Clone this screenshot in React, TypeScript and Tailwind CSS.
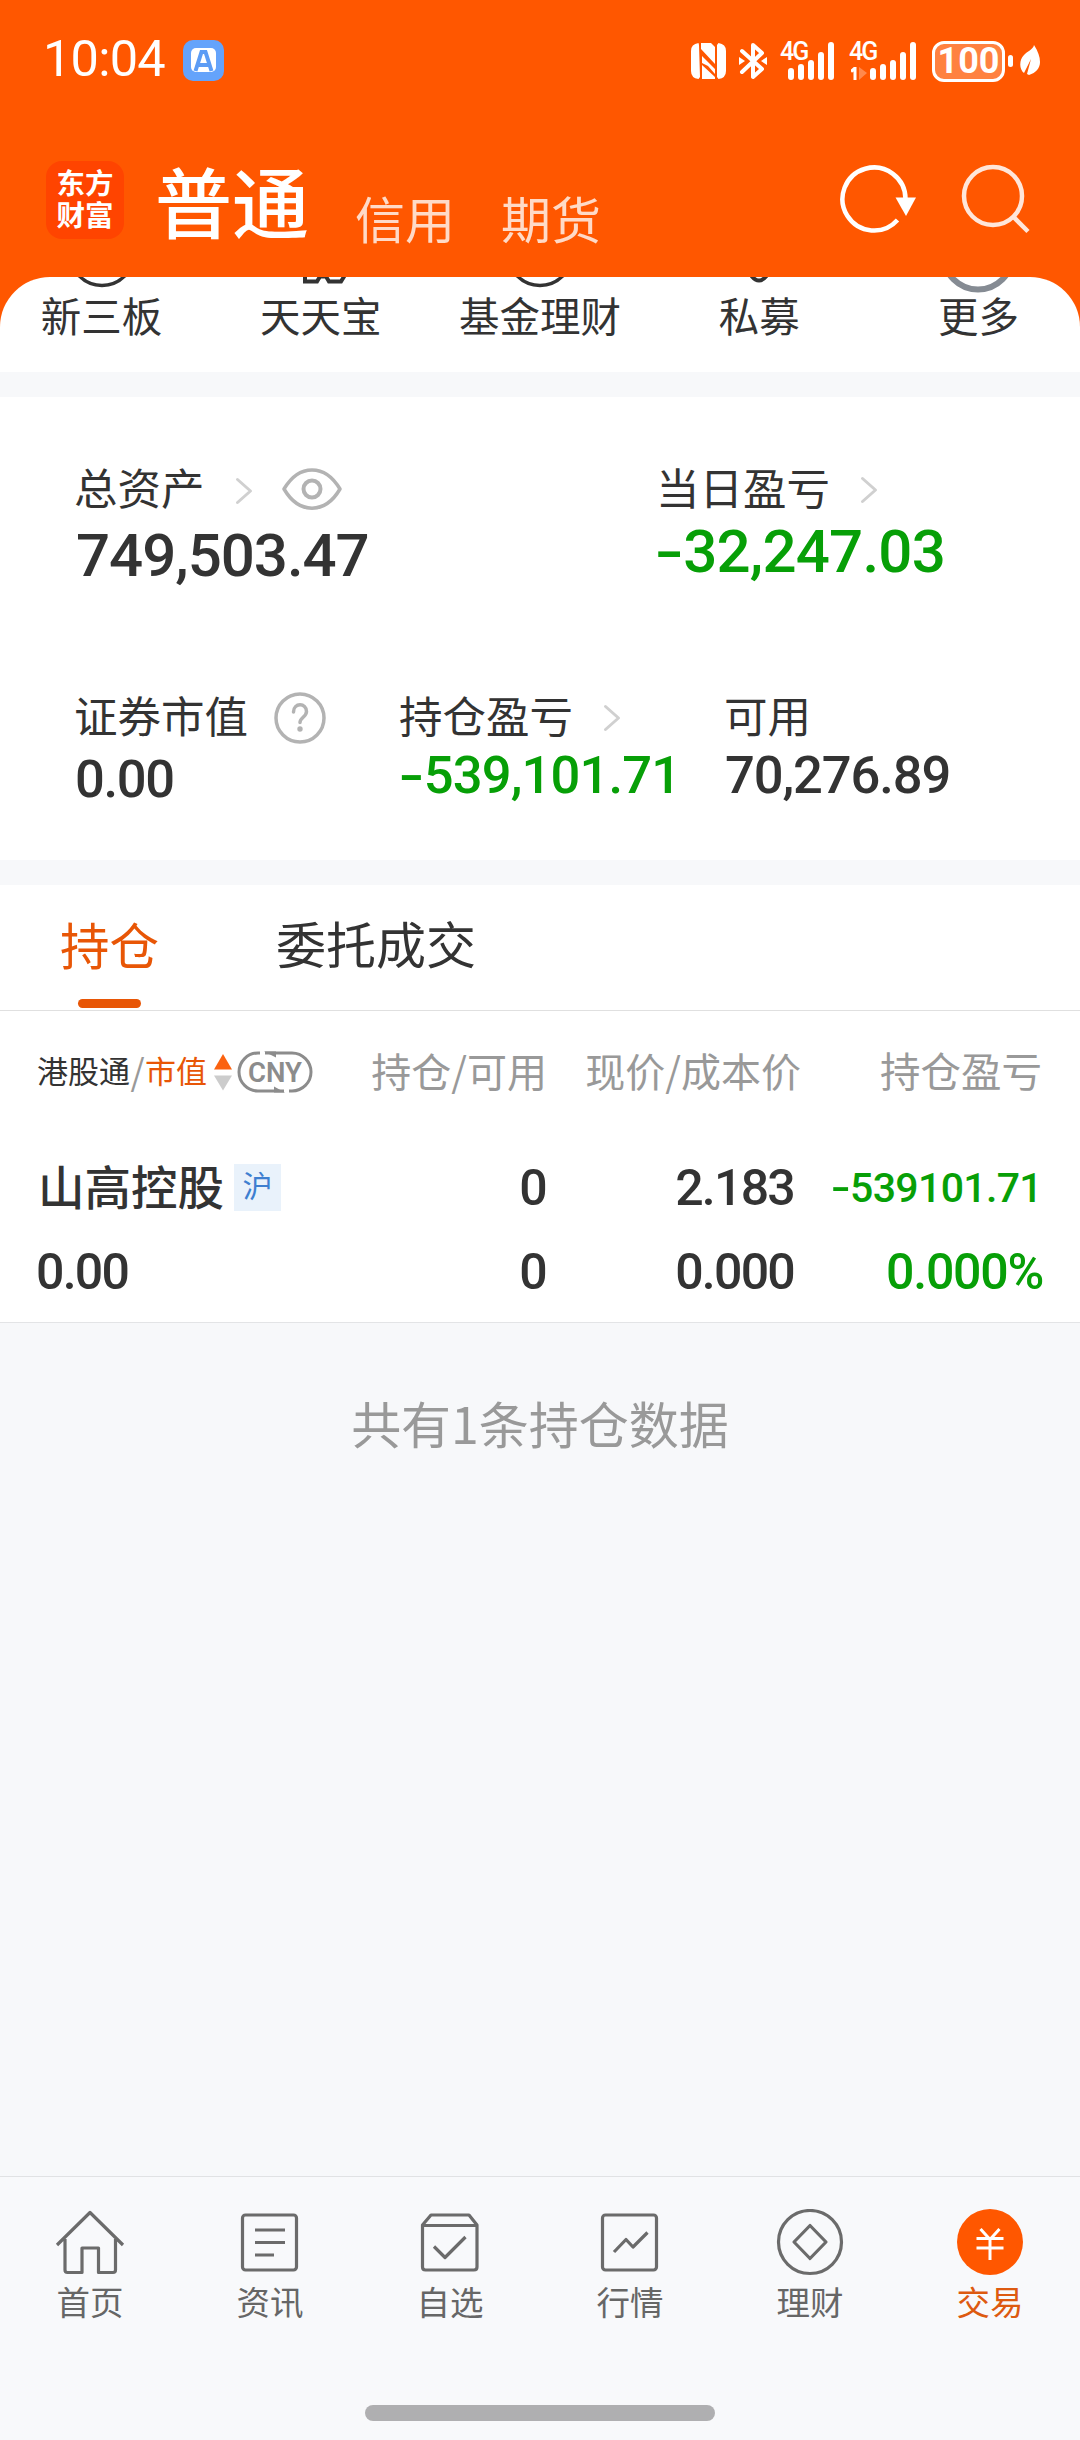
import React from "react";

const cjk = "font-['Noto_Sans_CJK_SC',sans-serif]";

function Num({ value, className = "" }: { value: string; className?: string }) {
  const negative = value.startsWith("-");
  return (
    <span className={"block whitespace-nowrap font-['Roboto','Noto_Sans_CJK_SC',sans-serif] font-medium " + className}>
      {negative && <span className="mr-[0.06em] inline-block w-[0.41em] text-left"><span className="inline-block origin-left scale-x-[1.4]">-</span></span>}
      {negative ? value.slice(1) : value}
    </span>
  );
}

function Chevron({ className = "" }: { className?: string }) {
  return (
    <svg className={className} width="18" height="28" viewBox="0 0 18 28" fill="none" stroke="#d0d0d0" strokeWidth="3" strokeLinecap="round" strokeLinejoin="round">
      <path d="M2.500 2.500 15.500 14 2.500 25.500" />
    </svg>
  );
}

function Bars({ heights }: { heights: number[] }) {
  return (
    <div className="flex h-[38px] items-end gap-1">
      {heights.map((h, i) => (
        <i key={i} className="block w-1.5 rounded-full bg-white" style={{ height: h }} />
      ))}
    </div>
  );
}

function StatusBar() {
  return (
    <div className="flex h-[122px] items-center pl-[43px] pr-[39px] text-white">
      <span className="mt-[-4px] font-['Roboto'] text-[50.5px] leading-[60px] tracking-[-0.015em]">10:04</span>
      <svg className="-mt-[2px] ml-[18px]" width="41" height="41" viewBox="0 0 41 41">
        <rect width="41" height="41" rx="10" fill="#64a3fb" />
        <rect x="8" y="8" width="25" height="24" rx="5" fill="#fff" />
        <path d="M12.500 31 18.500 12h4L28.500 31M15 25h11.500" fill="none" stroke="#5c9cf5" strokeWidth="4" />
      </svg>
      <div className="ml-auto flex items-center">
        <svg width="35" height="36" viewBox="0 0 35 36" fill="#fff">
          <path d="M7.500 0Q0 1 0 8V28Q0 35 7.500 36L9 34 8 2ZM27.500 0Q35 1 35 8V28Q35 35 27.500 36L26 34V2Z" />
          <path d="M10 0H20L24 4V21L10 6ZM11 13 24 26V31L17 23 11 20ZM11 22 24 34V36H11Z" />
        </svg>
        <svg className="ml-[13px]" width="28" height="38" viewBox="0 0 28 38" fill="none" stroke="#fff" strokeWidth="4" strokeLinecap="round" strokeLinejoin="round">
          <path d="M3 9 23 27 14 35V3l9 8L3 30" />
          <path d="M0 15v8l6-4ZM28 15v8l-6-4Z" fill="#fff" stroke="none" />
        </svg>
        <div className="relative ml-[21px]">
          <span className="absolute -left-2 -top-1 font-['Roboto'] text-[25px] font-medium leading-[28px] tracking-[-0.08em]">4G</span>
          <Bars heights={[12, 16, 20, 28, 38]} />
        </div>
        <div className="relative ml-[36px]">
          <span className="absolute -left-[21px] -top-1 font-['Roboto'] text-[25px] font-medium leading-[28px] tracking-[-0.08em]">4G</span>
          <svg className="absolute -left-[19px] top-[25px]" width="16" height="13" viewBox="0 0 16 13">
            <path d="M0 4.500 4 1v12" fill="none" stroke="#fff" strokeWidth="3" />
            <path d="M8 0v13L16 6Z" fill="#fff" opacity=".3" />
          </svg>
          <Bars heights={[12, 16, 20, 28, 38]} />
        </div>
        <div className="ml-[16px] flex h-[41px] w-[73px] items-center justify-center rounded-[12px] border-[3px] border-white bg-white/25 font-['Roboto'] text-[36px] font-bold leading-none">100</div>
        <i className="ml-[3px] block h-3 w-[5px] rounded-full bg-white" />
        <svg className="ml-[7px] mr-[1px]" width="20" height="32" viewBox="0 0 20 32">
          <path d="M14 0C18 6 20 12 20 17c0 6-4 11-11 13L7 29l4-15L4 28C-1 24-1 15 4 10 7 6 13 5 14 0Z" fill="#fff" />
        </svg>
      </div>
    </div>
  );
}

function Header() {
  return (
    <div className={"flex h-[155px] items-start pl-[46px] " + cjk}>
      <div className="mt-[39px] flex h-[78px] w-[78px] flex-col items-center justify-center rounded-[16px] bg-[#ff4400] pb-[5px] text-[28.5px] font-bold leading-[32px] text-white">
        <span>东方</span>
        <span>财富</span>
      </div>
      <span className="ml-[31px] mt-[36px] text-[77px] font-medium leading-[84px] text-white">普通</span>
      <span className="ml-[46px] mt-[67px] text-[50px] leading-[56px] text-[#ffdac7]">信用</span>
      <span className="ml-[46px] mt-[67px] text-[50px] leading-[56px] text-[#ffdac7]">期货</span>
      <svg className="ml-auto mt-[40px]" width="80" height="76" viewBox="0 0 80 76">
        <path d="M57.500 58A31.500 31.500 0 1 1 65.500 37" fill="none" stroke="#fff" strokeWidth="4.500" />
        <path d="M55.500 35.500h20.500L66 54Z" fill="#fff" />
      </svg>
      <svg className="ml-[41px] mr-[48px] mt-[40px]" width="71" height="76" viewBox="0 0 71 76" fill="none" stroke="#ffe6da" strokeWidth="4.500">
        <circle cx="32" cy="34" r="29" />
        <path d="m52 54.500 15 15" />
      </svg>
    </div>
  );
}

const quick = ["新三板", "天天宝", "基金理财", "私募", "更多"];

function QuickIcon({ index }: { index: number }) {
  return (
    <svg width="80" height="16" viewBox="0 0 80 16" fill="none" stroke="#333" strokeWidth="3.500">
      {(index === 0 || index === 2) && <circle cx="40" cy="-23.500" r="32" />}
      {index === 1 && <path d="M24-1V4.500H36L39-.5H45L48 4.500H60L64-2" strokeWidth="4" />}
      {index === 3 && <path d="M32.500-1Q40 8 47.500-1" strokeWidth="4" />}
      {index === 4 && <circle cx="40" cy="-22" r="34.500" stroke="#858b93" strokeWidth="6" />}
    </svg>
  );
}

function QuickRow() {
  return (
    <div className="bg-[#ff5700]">
      <div className="h-[95px] overflow-hidden rounded-t-[50px] bg-white">
        <div className="-mx-2 grid grid-cols-5">
          {quick.map((text, i) => (
            <div key={text} className={"flex flex-col items-center text-[40.5px] leading-[44px] text-[#333] " + cjk}>
              <QuickIcon index={i} />
              <span>{text}</span>
            </div>
          ))}
        </div>
      </div>
    </div>
  );
}

const label = "-ml-[2px] text-[43.5px] leading-[48px] text-[#333] whitespace-nowrap " + cjk;

function Assets() {
  return (
    <div className="h-[463px] bg-white pl-[76px] pt-[66px]">
      <div className="flex h-[228px]">
        <div className="w-[582px]">
          <div className="flex h-12 items-center">
            <span className={label}>总资产</span>
            <Chevron className="ml-[30px] mt-[7px]" />
            <svg className="ml-[29px] mt-[3px]" width="60" height="42" viewBox="0 0 60 42" fill="none" stroke="#b3b3b3" strokeWidth="3.500" strokeLinejoin="round">
              <path d="M2 21C17-4.500 43-4.500 58 21 43 46.500 17 46.500 2 21Z" />
              <circle cx="30" cy="21" r="8.500" strokeWidth="4" />
            </svg>
          </div>
          <Num value="749,503.47" className="mt-[15px] text-[60px] leading-[60px] tracking-[-0.017em] text-[#333]" />
        </div>
        <div>
          <div className="flex h-12 items-center">
            <span className={label}>当日盈亏</span>
            <Chevron className="ml-[30px] mt-[6px]" />
          </div>
          <Num value="-32,247.03" className="-ml-[3px] mt-[11px] text-[60px] leading-[60px] tracking-[-0.013em] text-[#079f07]" />
        </div>
      </div>
      <div className="grid grid-cols-[325px_325px_325px]">
        <div>
          <div className="flex h-12 items-center">
            <span className={label}>证券市值</span>
            <svg className="ml-[26px] mt-[6px]" width="52" height="52" viewBox="0 0 52 52" fill="none" stroke="#b3b3b3" strokeWidth="3.500" strokeLinecap="round">
              <circle cx="26" cy="26" r="24" />
              <path d="M19.500 20C19.500 10.500 32.500 10.500 32.500 19.500 32.500 25 26 25.500 26 30.500" />
              <circle cx="26" cy="37" r="1.200" fill="#b3b3b3" strokeWidth="3" />
            </svg>
          </div>
          <Num value="0.00" className="-ml-[1px] mt-[12px] text-[52.5px] leading-[56px] tracking-[-0.025em] text-[#333]" />
        </div>
        <div>
          <div className="flex h-12 items-center">
            <span className={label}>持仓盈亏</span>
            <Chevron className="ml-[30px] mt-[6px]" />
          </div>
          <Num value="-539,101.71" className="-ml-[2px] mt-[8px] text-[52.5px] leading-[56px] tracking-[-0.016em] text-[#079f07]" />
        </div>
        <div>
          <div className="flex h-12 items-center">
            <span className={label}>可用</span>
          </div>
          <Num value="70,276.89" className="-ml-[1px] mt-[8px] text-[52.5px] leading-[56px] tracking-[-0.021em] text-[#333]" />
        </div>
      </div>
    </div>
  );
}

function Tabs() {
  return (
    <div className={"flex h-[126px] border-b border-[#e0e0e0] bg-white text-[49.5px] leading-[56px] " + cjk}>
      <div className="ml-[60px] flex flex-col items-center pt-[31px] text-[#e85606]">
        <span>持仓</span>
        <i className="mt-[27px] block h-[9px] w-[63px] rounded-full bg-[#e85606]" />
      </div>
      <span className="ml-[117px] mt-[29px] text-[50px] text-[#333]">委托成交</span>
    </div>
  );
}

function Holdings() {
  const cell = "text-[50px] leading-[60px] tracking-[-0.035em]";
  return (
    <div className="h-[312px] border-b border-[#e3e4e6] bg-white">
      <div className={"flex h-[83px] items-end whitespace-nowrap text-[40px] leading-[48px] text-[#999] " + cjk}>
        <div className="flex w-[345px] items-center pl-[37px] text-[31px] text-[#333]">
          <span>港股通</span>
          <span className="w-[15px] text-center text-[36px] text-[#999]">/</span>
          <span className="text-[#e85606]">市值</span>
          <svg className="ml-[7px] mt-[4px]" width="18" height="38" viewBox="0 0 18 38">
            <path d="M9 1 18 16.500H0Z" fill="#fb6210" />
            <path d="M0 22.500h18L9 37.500Z" fill="#ccc" />
          </svg>
          <svg className="ml-[5px] mt-[4px]" width="76" height="42" viewBox="0 0 76 42" fill="none" stroke="#8c8c8c" strokeWidth="3">
            <path d="M23 2H21A19 19 0 0 0 21 40H47M52 40H55A19 19 0 0 0 55 2H28" />
            <path d="m27 .5 12 6V.5ZM48 41.500 37 35.500v6Z" fill="#8c8c8c" stroke="none" />
            <text x="38" y="31" textAnchor="middle" textLength="54" lengthAdjust="spacingAndGlyphs" fontFamily="Roboto" fontSize="28.500" fontWeight="600" fill="#8c8c8c" stroke="none">CNY</text>
          </svg>
        </div>
        <span className="w-[202px] text-right">持仓/可用</span>
        <span className="w-[254px] text-right">现价/成本价</span>
        <span className="w-[241px] text-right text-[40.5px]">持仓盈亏</span>
      </div>
      <div className="mt-[64px] flex h-[60px] items-center text-[#333]">
        <div className="flex w-[345px] items-center pl-[38px]">
          <span className={"mt-[-7px] text-[46.500px] font-medium leading-[56px] " + cjk}>山高控股</span>
          <span className={"mt-[-1px] ml-[10px] h-[47px] w-[47px] bg-[#e9f2fb] text-center text-[30px] leading-[40px] text-[#3e7fd0] " + cjk}>沪</span>
        </div>
        <Num value="0" className={"w-[201px] text-right " + cell} />
        <Num value="2.183" className={"w-[248px] text-right " + cell} />
        <Num value="-539101.71" className="-mt-px w-[248px] text-right text-[41px] leading-[60px] tracking-[-0.016em] text-[#079f07]" />
      </div>
      <div className="mt-[24px] flex h-[60px] items-center text-[#333]">
        <Num value="0.00" className={"w-[345px] pl-[36px] " + cell} />
        <Num value="0" className={"w-[201px] text-right " + cell} />
        <Num value="0.000" className={"w-[248px] text-right " + cell} />
        <Num value="0.000%" className="w-[249px] text-right text-[50px] leading-[60px] tracking-[-0.025em] text-[#079f07]" />
      </div>
    </div>
  );
}

const navIcons: React.ReactNode[] = [
  <path d="M2 35 35 2.500 68 35M10 29V60q0 2.500 2.500 2.500H27V38H43.500V62.500H58q2.500 0 2.500-2.500V29" />,
  <><rect x="7.500" y="5" width="54" height="55" rx="3" /><path d="M20 20H50M20 32.500H50M20 45H39" /></>,
  <><path d="M7.500 15 16 5H54L62 15V57q0 3-3 3H10.500q-3 0-3-3ZM7.500 15.500H62" /><path d="M19 36.500 30 47.500 50.500 27" /></>,
  <><rect x="7.500" y="5" width="54" height="55" rx="3" /><path d="M19 42 31 29.500 38 37 52.500 22.500" /></>,
  <><circle cx="35" cy="32" r="31.500" /><path d="M35 15.500 51 32 35 48.500 19 32Z" /></>,
  <><circle cx="35" cy="32" r="33" fill="#ff5700" stroke="none" /><path d="m25.500 19 9.500 10.500 9.500-10.500M21.500 28.500H48.500M21.500 38H48.500M35 29V50" stroke="#fff" strokeWidth="3" /></>,
];
const navLabels = ["首页", "资讯", "自选", "行情", "理财", "交易"];

function BottomNav() {
  return (
    <div className="h-[264px] border-t border-[#e1e2e4] bg-[#f8f9fb]">
      <div className="grid h-[228px] grid-cols-6">
        {navLabels.map((text, i) => (
          <div key={text} className={"flex flex-col items-center pt-[32px] text-[33.500px] leading-[40px] " + cjk + (i === 5 ? " text-[#dd5a10]" : " text-[#666]")}>
            <svg width="70" height="68" viewBox="0 -1 70 68" fill="none" stroke="#6b6b6b" strokeWidth="3.200" strokeLinejoin="round">
              {navIcons[i]}
            </svg>
            <span className="mt-[4px]">{text}</span>
          </div>
        ))}
      </div>
      <i className="mx-auto block h-4 w-[350px] rounded-full bg-[#afafb1]" />
    </div>
  );
}

export default function App() {
  return (
    <div className="flex h-[2440px] w-[1080px] flex-col overflow-hidden bg-[#f7f8fa]">
      <div className="bg-[#ff5700]">
        <StatusBar />
        <Header />
      </div>
      <QuickRow />
      <div className="h-[25px]" />
      <Assets />
      <div className="h-[25px]" />
      <Tabs />
      <Holdings />
      <div className={"mt-[69px] text-center text-[50px] leading-[60px] text-[#999] " + cjk}>共有1条持仓数据</div>
      <div className="flex-1" />
      <BottomNav />
    </div>
  );
}
